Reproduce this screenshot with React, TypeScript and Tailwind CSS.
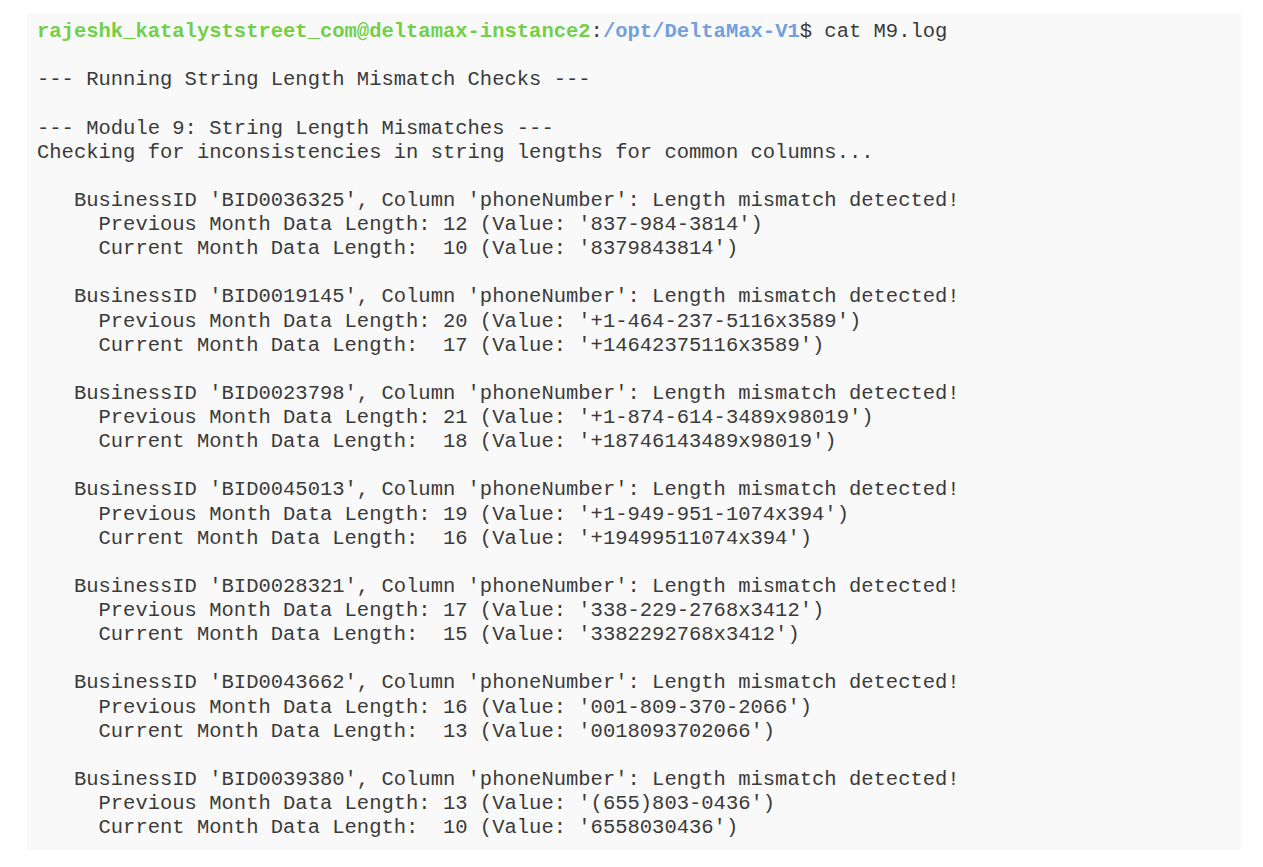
const groups = [
  { id: 'BID0036325', prev: ['12', "837-984-3814"], cur: ['10', "8379843814"] },
  { id: 'BID0019145', prev: ['20', "+1-464-237-5116x3589"], cur: ['17', "+14642375116x3589"] },
  { id: 'BID0023798', prev: ['21', "+1-874-614-3489x98019"], cur: ['18', "+18746143489x98019"] },
  { id: 'BID0045013', prev: ['19', "+1-949-951-1074x394"], cur: ['16', "+19499511074x394"] },
  { id: 'BID0028321', prev: ['17', "338-229-2768x3412"], cur: ['15', "3382292768x3412"] },
  { id: 'BID0043662', prev: ['16', "001-809-370-2066"], cur: ['13', "0018093702066"] },
  { id: 'BID0039380', prev: ['13', "(655)803-0436"], cur: ['10', "6558030436"] },
];

export default function App() {
  return (
    <div className="min-h-screen bg-white pt-[13px] pl-[27px] pr-[22px]">
      <div
        className="bg-[#f9f9f9] pt-[7px] pb-[10px] pl-[10px] text-[20.5px] leading-[24.12px] text-[#3a3a3a] whitespace-pre"
        style={{ fontFamily: '"Liberation Mono", "Courier New", monospace' }}
      >
        <div>
          <span className="font-bold text-[#72d046]">rajeshk_katalyststreet_com@deltamax-instance2</span>
          <span>:</span>
          <span className="font-bold text-[#72a0dc]">/opt/DeltaMax-V1</span>
          <span>$ cat M9.log</span>
        </div>
        <div> </div>
        <div>--- Running String Length Mismatch Checks ---</div>
        <div> </div>
        <div>--- Module 9: String Length Mismatches ---</div>
        <div>Checking for inconsistencies in string lengths for common columns...</div>
        {groups.map((g) => (
          <div key={g.id}>
            <div> </div>
            <div>{`   BusinessID '${g.id}', Column 'phoneNumber': Length mismatch detected!`}</div>
            <div>{`     Previous Month Data Length: ${g.prev[0]} (Value: '${g.prev[1]}')`}</div>
            <div>{`     Current Month Data Length:  ${g.cur[0]} (Value: '${g.cur[1]}')`}</div>
          </div>
        ))}
      </div>
    </div>
  );
}
